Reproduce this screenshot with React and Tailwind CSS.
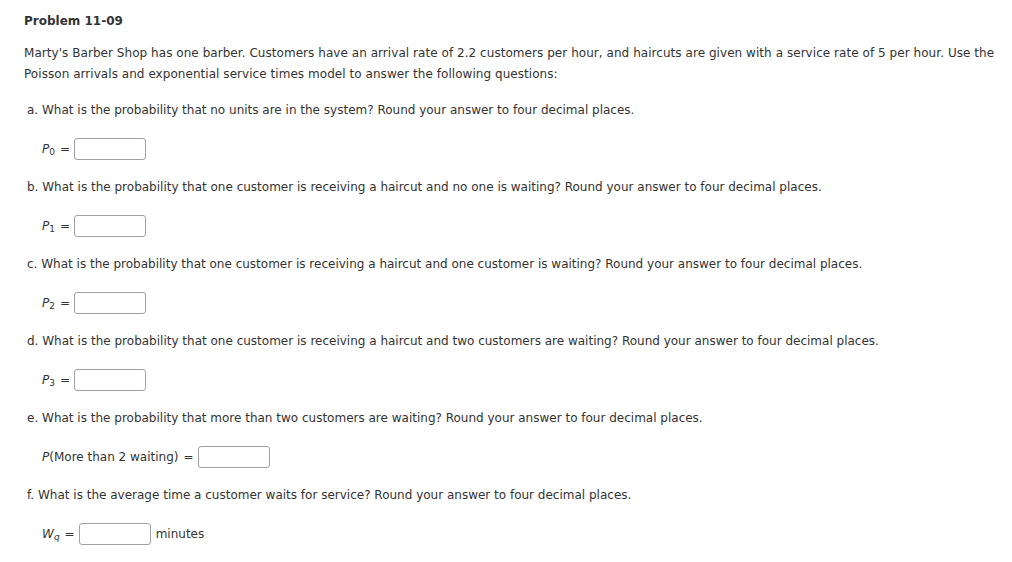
import React from 'react';

const font = { fontFamily: 'Verdana, "DejaVu Sans", sans-serif' };

function Sym({ base, sub, italicSub = false }) {
  return (
    <span>
      <span className="italic">{base}</span>
      <sub className={`text-[9px] ${italicSub ? 'italic' : ''}`}>{sub}</sub>
    </span>
  );
}

function Answer({ label, after }) {
  return (
    <div className="flex items-center h-[22px] pl-[18px]">
      <span className="mr-[5px]">{label}</span>
      <span className="mr-[4px]">=</span>
      <span className="inline-block h-[22px] w-[72px] border border-[#a0a0a0] rounded-[3px] bg-white" />
      {after && <span className="ml-[5px]">{after}</span>}
    </div>
  );
}

const questions = [
  {
    q: 'a. What is the probability that no units are in the system? Round your answer to four decimal places.',
    label: <Sym base="P" sub="0" />,
  },
  {
    q: 'b. What is the probability that one customer is receiving a haircut and no one is waiting? Round your answer to four decimal places.',
    label: <Sym base="P" sub="1" />,
  },
  {
    q: 'c. What is the probability that one customer is receiving a haircut and one customer is waiting? Round your answer to four decimal places.',
    label: <Sym base="P" sub="2" />,
  },
  {
    q: 'd. What is the probability that one customer is receiving a haircut and two customers are waiting? Round your answer to four decimal places.',
    label: <Sym base="P" sub="3" />,
  },
  {
    q: 'e. What is the probability that more than two customers are waiting? Round your answer to four decimal places.',
    label: (
      <span>
        <span className="italic">P</span>(More than 2 waiting)
      </span>
    ),
  },
  {
    q: 'f. What is the average time a customer waits for service? Round your answer to four decimal places.',
    label: <Sym base="W" sub="q" italicSub />,
    after: 'minutes',
  },
];

export default function App() {
  return (
    <div className="w-[1012px] h-[562px] bg-white text-[#333] text-[12px] leading-[21px] pl-[24px] pr-[14px] pt-[11px]" style={font}>
      <h1 className="font-bold text-[12px] text-[#333]">Problem 11-09</h1>
      <p className="mt-[11px] tracking-[0.05px]">
        Marty's Barber Shop has one barber. Customers have an arrival rate of 2.2 customers per hour, and haircuts are given with a service rate of 5 per hour. Use the Poisson arrivals and exponential service times model to answer the following questions:
      </p>
      <div className="mt-[15px] flex flex-col">
        {questions.map((item, i) => (
          <div key={i} className="flex flex-col">
            <div className="pl-[3px] h-[21px]">{item.q}</div>
            <div className="my-[17px]">
              <Answer label={item.label} after={item.after} />
            </div>
          </div>
        ))}
      </div>
    </div>
  );
}
